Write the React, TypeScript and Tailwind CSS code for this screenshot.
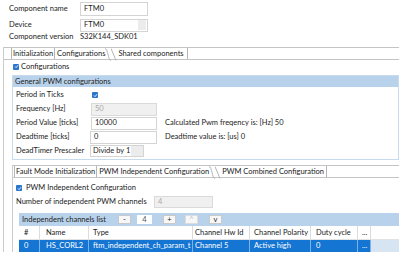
import React from 'react';

const Check = () => (
  <span className="w-[6px] h-[6px] bg-[#2a76cc] rounded-[1px] flex items-center justify-center shrink-0">
    <svg width="5" height="5" viewBox="0 0 5 5">
      <path d="M1 2.5 L2.1 3.6 L4.1 1.2" stroke="white" strokeWidth="0.9" fill="none" />
    </svg>
  </span>
);

const Slope = ({ flip = false }: { flip?: boolean }) => (
  <svg width="6" height="13" viewBox="0 0 6 13" className="shrink-0">
    {flip ? (
      <path d="M0 0.5 C3 0.5 3 12.5 6 12.5" stroke="#b5b5b5" strokeWidth="1" fill="none" />
    ) : (
      <path d="M0 0.5 L5 12.5" stroke="#b5b5b5" strokeWidth="1" fill="none" />
    )}
  </svg>
);

const cols = [
  { w: 'w-[21px]', pl: 'pl-[5px]', head: '#', val: '0' },
  { w: 'w-[49px]', pl: 'pl-[6px]', head: 'Name', val: 'HS_CORL2' },
  { w: 'w-[104px]', pl: 'pl-[4px]', head: 'Type', val: 'ftm_independent_ch_param_t' },
  { w: 'w-[57px]', pl: 'pl-[2px]', head: 'Channel Hw Id', val: 'Channel 5' },
  { w: 'w-[61px]', pl: 'pl-[4px]', head: 'Channel Polarity', val: 'Active high' },
  { w: 'w-[47px]', pl: 'pl-[5px]', head: 'Duty cycle', val: '0' },
  { w: 'w-[13px]', pl: 'pl-[4px]', head: '...', val: '...' },
];

const Btn = ({ label, dim = false, white = false }: { label: string; dim?: boolean; white?: boolean }) => (
  <div
    className={`h-[9px] flex items-center justify-center border ${
      white ? 'w-[15px] bg-white border-white text-[#555]' : 'w-[13px] bg-[#f7f7f7] border-[#c9c9c9]'
    } ${dim ? 'text-[#c0c0c0] border-[#dcdcdc]' : ''}`}
  >
    {label}
  </div>
);

export default function App() {
  return (
    <div className="w-[399px] h-[255px] overflow-hidden bg-white text-[#222] text-[7.5px] leading-none whitespace-nowrap font-['Lato',sans-serif]">
      {/* header fields */}
      <div className="pt-[2px] pl-[9px]">
        <div className="flex items-center h-[14px]">
          <span className="w-[71px]">Component name</span>
          <div className="w-[68px] h-[14px] border border-[#d4d4d4] flex items-center pl-[3px]">FTM0</div>
        </div>
        <div className="flex items-center h-[14px] mt-[2px]">
          <span className="w-[71px]">Device</span>
          <div className="w-[68px] h-[13px] border border-[#d4d4d4] flex items-center pl-[3px] justify-between pr-[1px]">
            <span>FTM0</span>
            <span className="w-[8px] h-[10px] bg-[#ececec]" />
          </div>
        </div>
        <div className="flex items-center h-[10px]">
          <span className="w-[71px]">Component version</span>
          <span>S32K144_SDK01</span>
        </div>
      </div>

      {/* outer tab folder */}
      <div className="mt-[5px] ml-[3px] border-l border-[#cccccc]">
        <div className="flex h-[13px] border-y border-[#c4c4c4] pl-[7px]">
          <div className="flex items-center px-[1px] border-x border-[#b5b5b5]">Initialization</div>
          <div className="flex items-center pl-[2px]">Configurations</div>
          <Slope flip />
          <Slope />
          <div className="flex items-center pl-[1px] pr-[3px] border-r border-[#b5b5b5]">Shared components</div>
        </div>

        <div className="pl-[8px]">
          <div className="flex items-center gap-[2px] h-[11px] mt-[1px] pl-[1px]">
            <Check />
            <span>Configurations</span>
          </div>

          {/* General PWM configurations group */}
          <div className="mt-[3px] border border-[#c7dbef]">
            <div className="h-[11px] bg-[#b9d2eb] flex items-center pl-[2px]">General PWM configurations</div>
            <div className="pl-[3px] pt-[1px] pb-[1px]">
              <div className="flex items-center h-[14px]">
                <span className="w-[76px]">Period in Ticks</span>
                <Check />
              </div>
              <div className="flex items-center h-[14px]">
                <span className="w-[75px]">Frequency [Hz]</span>
                <div className="w-[66px] h-[13px] border border-[#dadada] bg-[#f0f0f0] text-[#a8a8a8] flex items-center pl-[3px]">50</div>
              </div>
              <div className="flex items-center h-[14px]">
                <span className="w-[75px]">Period Value [ticks]</span>
                <div className="w-[66px] h-[13px] border border-[#d4d4d4] flex items-center pl-[3px]">10000</div>
                <span className="ml-[8px]">Calculated Pwm freqency is: [Hz] 50</span>
              </div>
              <div className="flex items-center h-[14px]">
                <span className="w-[74px]">Deadtime [ticks]</span>
                <div className="w-[67px] h-[13px] border border-[#d4d4d4] flex items-center pl-[3px]">0</div>
                <span className="ml-[8px]">Deadtime value is: [us] 0</span>
              </div>
              <div className="flex items-center h-[14px]">
                <span className="w-[74px]">DeadTimer Prescaler</span>
                <div className="w-[54px] h-[12px] border border-[#d4d4d4] flex items-center">
                  <span className="pl-[2px] flex-1">Divide by 1</span>
                  <span className="w-[12px] h-full bg-[#ececec]" />
                </div>
              </div>
            </div>
          </div>

          {/* inner tab folder */}
          <div className="mt-[5px] border-l border-[#cccccc]">
            <div className="flex h-[13px] border-y border-[#c4c4c4] pl-[1px]">
              <div className="flex items-center px-[1px] border-x border-[#b5b5b5]">Fault Mode Initialization</div>
              <div className="flex items-center pl-[2px]">PWM Independent Configuration</div>
              <Slope flip />
              <Slope />
              <div className="flex items-center pl-[1px] pr-[2px] border-r border-[#b5b5b5]">PWM Combined Configuration</div>
            </div>

            <div className="pl-[3px]">
              <div className="flex items-center gap-[4px] h-[12px] mt-[4px]">
                <Check />
                <span>PWM Independent Configuration</span>
              </div>
              <div className="flex items-center h-[14px] mt-[1px]">
                <span className="w-[138px]">Number of independent PWM channels</span>
                <div className="w-[59px] h-[12px] border border-[#dadada] bg-[#f0f0f0] text-[#a8a8a8] flex items-center pl-[3px]">4</div>
              </div>

              {/* channels table */}
              <div className="ml-[3px] mt-[4px]">
                <div className="h-[13px] bg-[#b9d2eb] flex items-center pl-[3px]">
                  <span className="w-[96px]">Independent channels list</span>
                  <div className="flex items-center">
                    <Btn label="-" />
                    <div className="ml-[6px]"><Btn label="4" white /></div>
                    <div className="ml-[11px]"><Btn label="+" /></div>
                    <div className="ml-[9px]"><Btn label="^" dim /></div>
                    <div className="ml-[11px]"><Btn label="v" /></div>
                  </div>
                </div>
                <div className="flex h-[14px] border-b border-[#e2e2e2]">
                  {cols.map((c) => (
                    <div key={c.head} className={`${c.w} ${c.pl} shrink-0 flex items-center border-r border-[#dcdcdc] overflow-hidden`}>
                      {c.head}
                    </div>
                  ))}
                </div>
                <div className="flex h-[12px]">
                  {cols.map((c) => (
                    <div key={c.head} className={`${c.w} ${c.pl} shrink-0 flex items-center bg-[#1475d3] text-white border-r border-[#7fb2e6] overflow-hidden`}>
                      {c.val}
                    </div>
                  ))}
                  <div className="flex-1 bg-[#d7e4f2]" />
                </div>
              </div>
            </div>
          </div>
        </div>
      </div>
    </div>
  );
}
